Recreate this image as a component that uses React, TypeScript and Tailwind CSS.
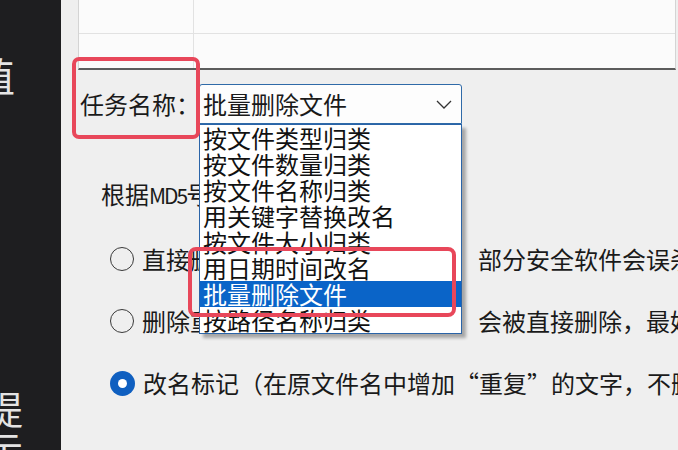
import React from 'react';

const options = [
  '按文件类型归类',
  '按文件数量归类',
  '按文件名称归类',
  '用关键字替换改名',
  '按文件大小归类',
  '用日期时间改名',
  '批量删除文件',
  '按路径名称归类',
];

const Radio = ({ checked }: { checked?: boolean }) =>
  checked ? (
    <span className="w-[25px] h-[25px] rounded-full bg-[#0f5fc0] flex items-center justify-center shrink-0">
      <span className="w-[9px] h-[9px] rounded-full bg-white" />
    </span>
  ) : (
    <span className="w-[24px] h-[24px] rounded-full border-[1.5px] border-[#3a3a3a] shrink-0" />
  );

export default function App() {
  return (
    <div className="relative w-[678px] h-[450px] overflow-hidden flex font-['Noto_Sans_CJK_SC','Noto_Sans',sans-serif] text-[#1a1a1a]">
      {/* Sidebar */}
      <aside className="w-[61px] shrink-0 bg-[#1e1e20] flex flex-col text-[#e4e4e4] overflow-hidden">
        <div className="mt-[55px] ml-[-25px] text-[40px] leading-[40px]">值</div>
        <div className="mt-[8px] h-[2px] w-[48px] bg-[#bdbdbd]" />
        <div className="mt-[285px] ml-[-15px] text-[38px] leading-[40px]">
          提
          <br />
          示
        </div>
      </aside>

      {/* Main */}
      <main className="flex-1 min-w-0 bg-[#efefef] flex flex-col overflow-hidden">
        {/* Table */}
        <div className="ml-[17px] mr-[2px] h-[70px] shrink-0 bg-[#fbfbfb] border-l border-r border-[#d4d4d4] border-b-2 border-b-[#5c5c5c] grid grid-cols-[115px_1fr] grid-rows-2">
          <div className="border-r border-b border-[#e2e2e2]" />
          <div className="border-b border-[#e2e2e2]" />
          <div className="border-r border-[#e2e2e2]" />
          <div />
        </div>

        {/* Task name */}
        <div className="mt-[14px] flex items-center h-[40px] shrink-0">
          <span className="ml-[19px] w-[119px] shrink-0 whitespace-nowrap text-[24px] leading-[24px]">任务名称：</span>
          <div className="relative shrink-0 w-[263px] h-[40px] border border-[#2f6aa8] rounded-t-[3px] bg-[#fdfdfd] flex items-center justify-between pl-[3px] pr-[9px]">
            <span className="text-[24px] leading-[24px] whitespace-nowrap">批量删除文件</span>
            <svg width="16" height="9" viewBox="0 0 16 9" fill="none">
              <path d="M1 1l7 7 7-7" stroke="#333" strokeWidth="1.3" />
            </svg>

            {/* Dropdown list */}
            <ul className="absolute left-[-1px] top-[39px] z-10 w-[263px] bg-white border border-[#2a64a8] shadow-[4px_4px_3px_rgba(0,0,0,0.3)]">
              {options.map((o) => (
                <li
                  key={o}
                  className={`h-[26px] leading-[26px] pl-[3px] text-[24px] whitespace-nowrap ${
                    o === '批量删除文件' ? 'bg-[#0a64c8] text-white' : 'text-[#111]'
                  }`}
                >
                  {o}
                </li>
              ))}
            </ul>
          </div>
        </div>

        {/* MD5 hint */}
        <div className="mt-[58px] ml-[40px] text-[24px] leading-[24px] whitespace-nowrap">
          根据<span className="text-[21px] tracking-[-2px]">MD5</span>号码判断重复文件：
        </div>

        {/* Options */}
        <div className="mt-[39px] ml-[49px] h-[26px] flex items-center gap-[8px] whitespace-nowrap text-[24px] leading-[26px]">
          <Radio />
          <span>直接删除到系统回收站，</span>
          <span className="ml-[64px]">部分安全软件会误杀</span>
        </div>
        <div className="mt-[36px] ml-[49px] h-[26px] flex items-center gap-[8px] whitespace-nowrap text-[24px] leading-[26px]">
          <Radio />
          <span>删除重复文件，重复文件</span>
          <span className="ml-[64px]">会被直接删除，最好先备份</span>
        </div>
        <div className="mt-[36px] ml-[49px] h-[26px] flex items-center gap-[8px] whitespace-nowrap text-[24px] leading-[26px]">
          <Radio checked />
          <span>改名标记（在原文件名中增加“重复”的文字，不删除文件）</span>
        </div>
      </main>

      {/* Annotation boxes */}
      <div className="absolute left-[72px] top-[57px] w-[128px] h-[82px] border-4 border-[#e8475a] rounded-[7px] z-20" />
      <div className="absolute left-[188px] top-[247px] w-[268px] h-[70px] border-4 border-[#e8475a] rounded-[8px] z-20" />
    </div>
  );
}
